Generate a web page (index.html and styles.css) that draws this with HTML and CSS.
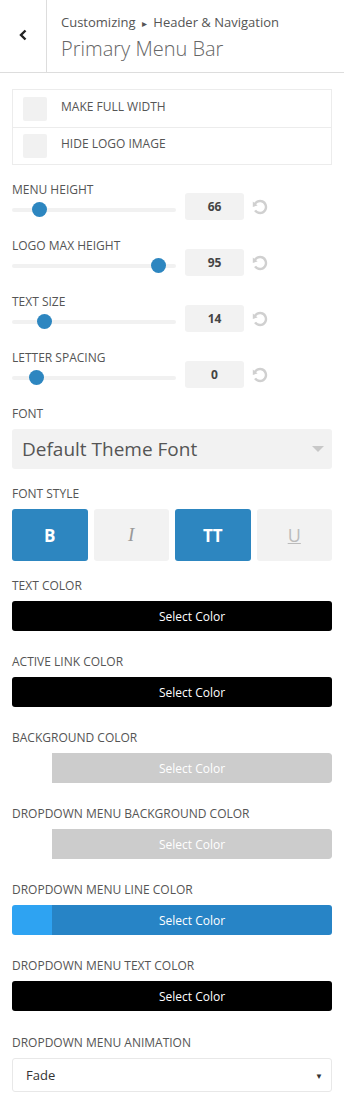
FILE: index.html
```html
<!DOCTYPE html>
<html lang="en">
<head>
    <meta charset="UTF-8">
    <meta name="viewport" content="width=device-width, initial-scale=1.0">
    <title>Primary Menu Bar</title>
    <link rel="stylesheet" href="styles.css">
</head>
<body>
    <header class="panel-head">
        <a href="#" class="back-link" aria-label="Back">
            <svg width="10" height="12" viewBox="0 0 10 12"><polyline points="7.5,1.5 3,6 7.5,10.5" fill="none" stroke="#222" stroke-width="2.4"/></svg>
        </a>
        <div class="titles">
            <span class="crumb">Customizing <span class="crumb-sep">&#9656;</span> Header &amp; Navigation</span>
            <h1>Primary Menu Bar</h1>
        </div>
    </header>

    <main class="controls">
        <ul class="checks">
            <li class="check-row"><span class="check-box"></span><span class="check-label">Make Full Width</span></li>
            <li class="check-row"><span class="check-box"></span><span class="check-label">Hide Logo Image</span></li>
        </ul>

        <div class="range">
            <label class="field-label">Menu Height</label>
            <div class="range-row">
                <div class="track"><span class="thumb" style="left: 20px"></span></div>
                <span class="range-value">66</span>
                <svg class="reset" width="16" height="16" viewBox="0 0 20 20"><path d="M10.25 1.02c5.1 0 8.75 4.04 8.75 9s-3.65 9-8.75 9c-3.2 0-6.020-1.59-7.68-3.99l2.59-1.52c1.1 1.5 2.86 2.51 4.84 2.51 3.3 0 6-2.79 6-6s-2.7-6-6-6c-1.97 0-3.72 1-4.81 2.49L7 8.02l-6 2v-7L2.89 4.6c1.69-2.17 4.36-3.58 7.36-3.58z"/></svg>
            </div>
        </div>

        <div class="range">
            <label class="field-label">Logo Max Height</label>
            <div class="range-row">
                <div class="track"><span class="thumb" style="left: 139px"></span></div>
                <span class="range-value">95</span>
                <svg class="reset" width="16" height="16" viewBox="0 0 20 20"><path d="M10.25 1.02c5.1 0 8.75 4.04 8.75 9s-3.65 9-8.75 9c-3.2 0-6.020-1.59-7.68-3.99l2.59-1.52c1.1 1.5 2.86 2.51 4.84 2.51 3.3 0 6-2.79 6-6s-2.7-6-6-6c-1.97 0-3.72 1-4.81 2.49L7 8.02l-6 2v-7L2.89 4.6c1.69-2.17 4.36-3.58 7.36-3.58z"/></svg>
            </div>
        </div>

        <div class="range">
            <label class="field-label">Text Size</label>
            <div class="range-row">
                <div class="track"><span class="thumb" style="left: 25px"></span></div>
                <span class="range-value">14</span>
                <svg class="reset" width="16" height="16" viewBox="0 0 20 20"><path d="M10.25 1.02c5.1 0 8.75 4.04 8.75 9s-3.65 9-8.75 9c-3.2 0-6.020-1.59-7.68-3.99l2.59-1.52c1.1 1.5 2.86 2.51 4.84 2.51 3.3 0 6-2.79 6-6s-2.7-6-6-6c-1.97 0-3.72 1-4.81 2.49L7 8.02l-6 2v-7L2.89 4.6c1.69-2.17 4.36-3.58 7.36-3.58z"/></svg>
            </div>
        </div>

        <div class="range">
            <label class="field-label">Letter Spacing</label>
            <div class="range-row">
                <div class="track"><span class="thumb" style="left: 17px"></span></div>
                <span class="range-value">0</span>
                <svg class="reset" width="16" height="16" viewBox="0 0 20 20"><path d="M10.25 1.02c5.1 0 8.75 4.04 8.75 9s-3.65 9-8.75 9c-3.2 0-6.020-1.59-7.68-3.99l2.59-1.52c1.1 1.5 2.86 2.51 4.84 2.51 3.3 0 6-2.79 6-6s-2.7-6-6-6c-1.97 0-3.72 1-4.81 2.49L7 8.02l-6 2v-7L2.89 4.6c1.69-2.17 4.36-3.58 7.36-3.58z"/></svg>
            </div>
        </div>

        <div class="field field-font">
            <label class="field-label">Font</label>
            <div class="font-select">
                <span>Default Theme Font</span>
                <span class="font-caret"></span>
            </div>
        </div>

        <div class="field field-tight">
            <label class="field-label">Font Style</label>
            <div class="style-buttons">
                <span class="style-btn is-on bold">B</span>
                <span class="style-btn italic">I</span>
                <span class="style-btn is-on bold">TT</span>
                <span class="style-btn underline">U</span>
            </div>
        </div>

        <div class="field field-tight">
            <label class="field-label">Text Color</label>
            <div class="color-btn black"><span class="swatch"></span><span class="color-text">Select Color</span></div>
        </div>

        <div class="field">
            <label class="field-label">Active Link Color</label>
            <div class="color-btn black"><span class="swatch"></span><span class="color-text">Select Color</span></div>
        </div>

        <div class="field">
            <label class="field-label">Background Color</label>
            <div class="color-btn empty"><span class="swatch"></span><span class="color-text">Select Color</span></div>
        </div>

        <div class="field">
            <label class="field-label">Dropdown Menu Background Color</label>
            <div class="color-btn empty"><span class="swatch"></span><span class="color-text">Select Color</span></div>
        </div>

        <div class="field">
            <label class="field-label">Dropdown Menu Line Color</label>
            <div class="color-btn blue"><span class="swatch"></span><span class="color-text">Select Color</span></div>
        </div>

        <div class="field">
            <label class="field-label">Dropdown Menu Text Color</label>
            <div class="color-btn black"><span class="swatch"></span><span class="color-text">Select Color</span></div>
        </div>

        <div class="field field-anim">
            <label class="field-label">Dropdown Menu Animation</label>
            <div class="anim-select">
                <span>Fade</span>
                <span class="anim-caret">&#9660;</span>
            </div>
        </div>
    </main>
</body>
</html>
```

FILE: styles.css
```css
:root {
    --text-color: #555;
    --border-color: #ddd;
    --field-bg: #f2f2f2;
    --accent: #2d86c0;
}

body {
    margin: 0;
    font-family: 'Open Sans', 'Liberation Sans', sans-serif;
    color: var(--text-color);
    background-color: #fff;
}

/* header */

.panel-head {
    display: flex;
    height: 72px;
    border-bottom: 1px solid var(--border-color);
}

.back-link {
    width: 47px;
    border-right: 1px solid var(--border-color);
    display: flex;
    align-items: center;
    justify-content: center;
    padding-bottom: 3px;
    box-sizing: border-box;
}

.titles {
    padding: 13px 0 0 14px;
}

.crumb {
    display: block;
    font-size: 13px;
    line-height: 18px;
}

.crumb-sep {
    font-size: 10px;
    margin: 0 3px;
}

h1 {
    margin: 4px 0 0;
    font-size: 20px;
    font-weight: 300;
    line-height: 26px;
    color: #666;
}

/* controls */

.controls {
    padding: 16px 12px;
}

.field-label {
    display: block;
    font-size: 12px;
    line-height: 14px;
    text-transform: uppercase;
    margin-bottom: 8px;
}

.checks {
    list-style: none;
    margin: 0;
    padding: 0;
    border: 1px solid #ececec;
}

.check-row {
    display: flex;
    align-items: center;
    height: 37px;
}

.check-row + .check-row {
    height: 36px;
    border-top: 1px solid #ececec;
}

.check-box {
    width: 24px;
    height: 24px;
    margin-left: 10px;
    background-color: #f1f1f1;
    border-radius: 2px;
}

.check-label {
    margin-left: 14px;
    padding-bottom: 5px;
    font-size: 12px;
    text-transform: uppercase;
}

.range {
    margin-top: 18px;
}

.range + .range {
    margin-top: 19px;
}

.range .field-label {
    margin-bottom: -4px;
}

.range-row {
    display: flex;
    align-items: center;
    height: 27px;
}

.track {
    position: relative;
    width: 164px;
    height: 4px;
    margin-top: 6px;
    border-radius: 2px;
    background-color: #f1f1f1;
}

.thumb {
    position: absolute;
    top: -5.5px;
    width: 15px;
    height: 15px;
    border-radius: 50%;
    background-color: var(--accent);
}

.range-value {
    width: 59px;
    height: 27px;
    margin-left: 9px;
    border-radius: 3px;
    background-color: var(--field-bg);
    font-size: 12px;
    font-weight: 700;
    color: #444;
    display: flex;
    align-items: center;
    justify-content: center;
}

.reset {
    margin-left: 8px;
    fill: #d0d0d0;
}

.field {
    margin-top: 24px;
}

.field-font {
    margin-top: 19px;
}

.field-tight {
    margin-top: 18px;
}

.field-anim {
    margin-top: 25px;
}

.font-select {
    display: flex;
    align-items: center;
    justify-content: space-between;
    height: 40px;
    padding: 0 8px 0 10px;
    border-radius: 3px;
    background-color: var(--field-bg);
    font-size: 19px;
}

.font-caret {
    width: 0;
    height: 0;
    border-left: 6px solid transparent;
    border-right: 6px solid transparent;
    border-top: 6px solid #c8c8c8;
}

.style-buttons {
    display: grid;
    grid-template-columns: repeat(4, 1fr);
    gap: 6px;
}

.style-btn {
    height: 52px;
    border-radius: 3px;
    background-color: var(--field-bg);
    display: flex;
    align-items: center;
    justify-content: center;
    font-size: 17px;
    color: #aaa;
}

.style-btn.is-on {
    background-color: var(--accent);
    color: #fff;
}

.style-btn.bold {
    font-weight: 700;
}

.style-btn.italic {
    font-family: 'Liberation Serif', serif;
    font-style: italic;
    font-size: 19px;
    color: #999;
}

.style-btn.underline {
    text-decoration: underline;
    color: #bbb;
    font-size: 18px;
}

.color-btn {
    display: flex;
    height: 30px;
    border-radius: 3px;
    overflow: hidden;
}

.swatch {
    width: 40px;
}

.color-text {
    flex: 1;
    display: flex;
    align-items: center;
    justify-content: center;
    font-size: 12px;
    color: #fff;
}

.color-btn.black .swatch,
.color-btn.black .color-text {
    background-color: #000;
}

.color-btn.empty .swatch {
    background-color: #fff;
}

.color-btn.empty .color-text {
    background-color: #ccc;
    border-radius: 0 3px 3px 0;
}

.color-btn.blue .swatch {
    background-color: #2ea3f2;
}

.color-btn.blue .color-text {
    background-color: #2784c6;
}

.anim-select {
    display: flex;
    align-items: center;
    justify-content: space-between;
    height: 34px;
    padding: 0 8px 0 13px;
    border: 1px solid #e8e8e8;
    border-radius: 3px;
    box-sizing: border-box;
    font-size: 13px;
    color: #333;
}

.anim-caret {
    font-size: 8px;
}
```
